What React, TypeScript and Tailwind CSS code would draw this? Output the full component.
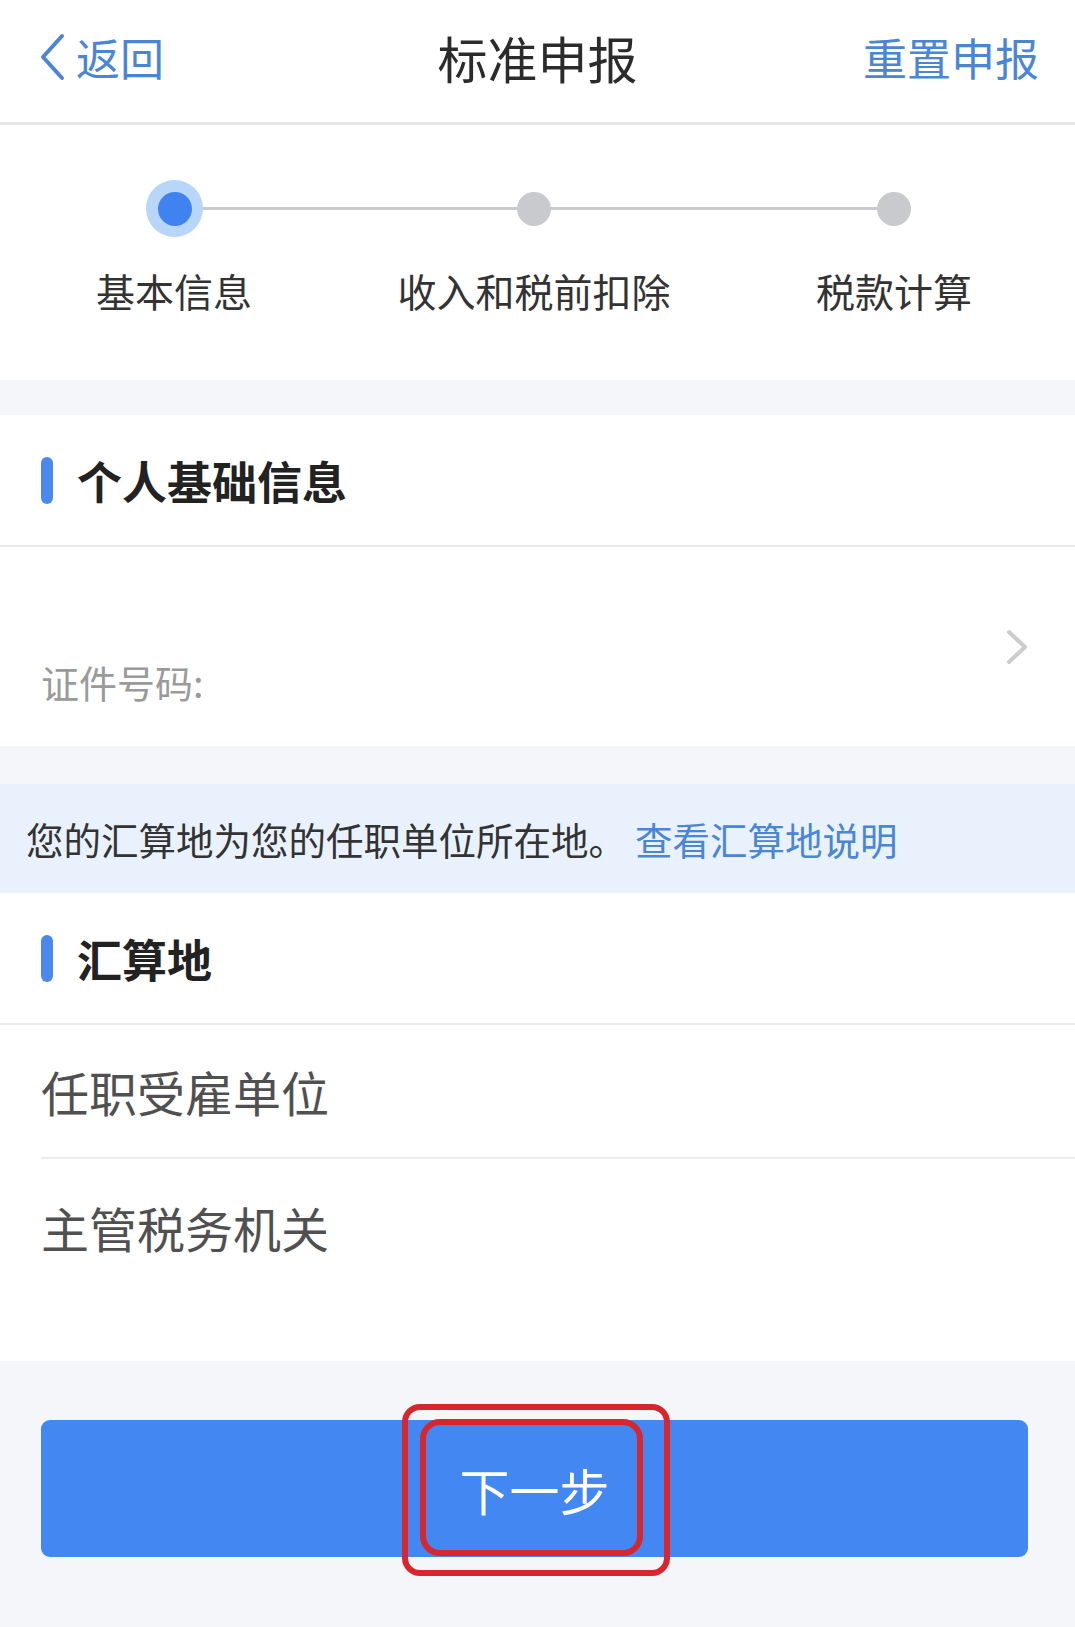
import React from "react";

const BLUE = "#4a86d3";

function SectionTitle({ title }: { title: string }) {
  return (
    <div className="h-[132px] flex items-center pl-[41px] border-b-2 border-[#ebebeb]">
      <div className="w-[12px] h-[47px] rounded-full bg-[#4a88ee]" />
      <span className="ml-[24px] text-[45px] leading-none font-bold text-[#222]">
        {title}
      </span>
    </div>
  );
}

function StepLabel({ text, width }: { text: string; width: string }) {
  return (
    <div className={`${width} text-center text-[39px] leading-none text-[#333]`}>
      {text}
    </div>
  );
}

export default function App() {
  return (
    <div className="w-[1075px] min-h-[1627px] bg-[#f4f6f9] font-['Noto_Sans_CJK_SC','Noto_Sans',sans-serif]">
      {/* 顶部导航 */}
      <header className="h-[125px] pb-[8px] bg-white border-b-[3px] border-[#e6e6e6] grid grid-cols-[1fr_auto_1fr] items-center">
        <div className="flex items-center pl-[38px]">
          <svg width="28" height="48" viewBox="0 0 28 48">
            <path
              d="M24 3 L5 24 L24 45"
              fill="none"
              stroke={BLUE}
              strokeWidth="4"
              strokeLinecap="round"
              strokeLinejoin="round"
            />
          </svg>
          <span className="ml-[10px] text-[44px] leading-none" style={{ color: BLUE }}>
            返回
          </span>
        </div>
        <h1 className="text-[50px] leading-none text-[#2b2b2b]">标准申报</h1>
        <div className="flex justify-end pr-[36px]">
          <span className="text-[44px] leading-none" style={{ color: BLUE }}>
            重置申报
          </span>
        </div>
      </header>

      {/* 步骤条 */}
      <section className="h-[255px] bg-white">
        <div className="pt-[55px] pl-[146px] flex items-center">
          <div className="w-[57px] h-[57px] rounded-full bg-[#b8d5fa] flex items-center justify-center">
            <div className="w-[34px] h-[34px] rounded-full bg-[#3f82f0]" />
          </div>
          <div className="w-[314px] h-[3px] bg-[#c9cacd]" />
          <div className="w-[34px] h-[34px] rounded-full bg-[#c9cacd]" />
          <div className="w-[326px] h-[3px] bg-[#c9cacd]" />
          <div className="w-[34px] h-[34px] rounded-full bg-[#c9cacd]" />
        </div>
        <div className="mt-[34px] flex">
          <StepLabel text="基本信息" width="w-[348px]" />
          <StepLabel text="收入和税前扣除" width="w-[372px]" />
          <StepLabel text="税款计算" width="w-[348px]" />
        </div>
      </section>

      {/* 个人基础信息 */}
      <section className="mt-[35px] bg-white">
        <SectionTitle title="个人基础信息" />
        <div className="h-[199px] flex items-center justify-between pl-[41px] pr-[47px]">
          <div className="self-stretch flex flex-col justify-end pb-[45px]">
            <span className="text-[38px] leading-none text-[#9a9a9a]">证件号码:</span>
          </div>
          <svg width="22" height="36" viewBox="0 0 22 36">
            <path
              d="M3 3 L19 18 L3 33"
              fill="none"
              stroke="#cccccc"
              strokeWidth="4"
              strokeLinecap="round"
              strokeLinejoin="round"
            />
          </svg>
        </div>
      </section>

      {/* 提示 */}
      <div className="mt-[38px] h-[109px] bg-[#e9f2fc] flex items-center pl-[26px] text-[37.5px] leading-none">
        <span className="text-[#333]">您的汇算地为您的任职单位所在地。</span>
        <span className="ml-[9px]" style={{ color: BLUE }}>
          查看汇算地说明
        </span>
      </div>

      {/* 汇算地 */}
      <section className="bg-white">
        <SectionTitle title="汇算地" />
        <div className="ml-[41px] h-[134px] flex items-center border-b-2 border-[#ececec]">
          <span className="text-[48px] leading-none text-[#505050]">任职受雇单位</span>
        </div>
        <div className="h-[202px] pl-[41px] pt-[44px]">
          <span className="text-[48px] leading-none text-[#505050]">主管税务机关</span>
        </div>
      </section>

      {/* 底部按钮 */}
      <div className="relative pt-[59px] pb-[69px]">
        <button className="mx-[41px] w-[987px] h-[137px] rounded-[9px] bg-[#4387f2] text-white text-[50px] leading-none">
          下一步
        </button>
        <div className="absolute left-[402px] top-[43px] w-[268px] h-[172px] rounded-[18px] border-[6px] border-[#d7262e]" />
        <div className="absolute left-[420px] top-[58px] w-[223px] h-[137px] rounded-[20px] border-[6px] border-[#d7262e]" />
      </div>
    </div>
  );
}
